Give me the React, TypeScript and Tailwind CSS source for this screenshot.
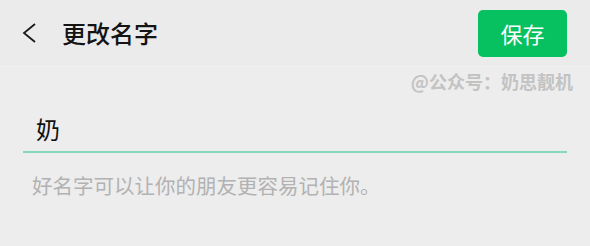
import React from "react";

export default function App() {
  const font = { fontFamily: '"Noto Sans CJK SC", "Noto Sans", sans-serif' };
  return (
    <div className="w-[590px] h-[246px] bg-[#ededed] overflow-hidden" style={font}>
      <div className="h-[67px] bg-[#ebebeb] border-b border-[#f1f1f1] flex items-center pl-[22px] pr-[23px]">
        <svg width="14" height="20" viewBox="0 0 14 20" className="shrink-0">
          <polyline points="13,1 2,10 13,19" fill="none" stroke="#1a1a1a" strokeWidth="1.8" strokeLinejoin="miter" />
        </svg>
        <div className="ml-[26px] text-[24px] leading-[24px] text-[#141414] font-medium">更改名字</div>
        <div className="flex-1" />
        <button className="w-[89px] h-[47px] rounded-[5px] bg-[#07c160] text-white text-[22px] leading-[22px] flex items-center justify-center">
          保存
        </button>
      </div>
      <div className="flex justify-end pr-[17px] mt-[5px]">
        <div className="text-[18px] leading-[18px] font-bold text-[#c3c3c3]">@公众号：奶思靓机</div>
      </div>
      <div className="mx-[23px] mt-[27px]">
        <div className="pl-[13px] pb-[10px] text-[24px] leading-[24px] text-[#111]">奶</div>
        <div className="h-[2px] bg-[#86d9b8]" />
      </div>
      <div className="pl-[32px] mt-[22px] text-[20.5px] leading-[21px] text-[#b2b2b2]">好名字可以让你的朋友更容易记住你。</div>
    </div>
  );
}
